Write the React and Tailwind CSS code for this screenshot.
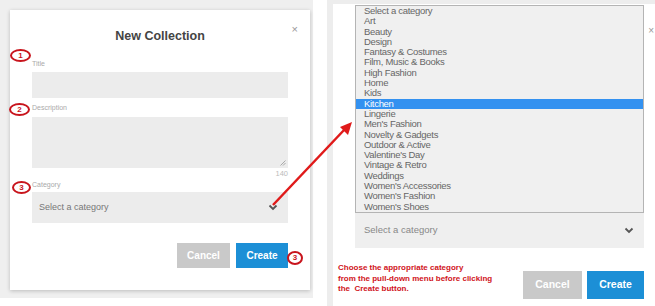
import React from "react";

const items = [
  "Select a category","Art","Beauty","Design","Fantasy & Costumes","Film, Music & Books","High Fashion","Home","Kids","Kitchen","Lingerie","Men's Fashion","Novelty & Gadgets","Outdoor & Active","Valentine's Day","Vintage & Retro","Weddings","Women's Accessories","Women's Fashion","Women's Shoes",
];

function Badge({ n, className }) {
  return (
    <div className={"absolute flex items-center justify-center rounded-[50%] border-2 border-[#c8141c] bg-white text-[8px] font-bold leading-none text-[#c8141c] " + className}>
      {n}
    </div>
  );
}

function Chevron({ className }) {
  return (
    <svg className={className} width="10" height="7" viewBox="0 0 10 7">
      <path d="M1.5 1.5 L5 5 L8.5 1.5" fill="none" stroke="#555" strokeWidth="1.8" />
    </svg>
  );
}

export default function App() {
  const font = { fontFamily: '"Liberation Sans", Arial, sans-serif' };
  return (
    <div className="relative flex h-[306px] w-[655px] overflow-hidden bg-white" style={font}>
      {/* LEFT */}
      <div className="h-[298px] w-[313px] shrink-0 bg-[#efefef] pl-[10px] pt-[10px]">
        <div className="relative flex h-[280px] w-[300px] flex-col bg-white px-[22px] shadow-[0_1px_4px_rgba(0,0,0,0.22)]">
          <div className="absolute right-[12px] top-[14px] text-[11px] leading-none text-[#999]">×</div>
          <div className="mt-[18px] text-center text-[12.5px] font-bold leading-[16px] text-[#444]">New Collection</div>
          <div className="mt-[16px] text-[7px] leading-[8px] text-[#aaa]">Title</div>
          <div className="mt-[4px] h-[26px] bg-[#ececec]" />
          <div className="mt-[6px] text-[7px] leading-[8px] text-[#aaa]">Description</div>
          <div className="relative mt-[5px] h-[51px] bg-[#ececec]">
            <svg className="absolute bottom-[2px] right-[2px]" width="6" height="6" viewBox="0 0 6 6">
              <path d="M0.5 5.5 L5.5 0.5 M3 5.5 L5.5 3" stroke="#999" strokeWidth="0.8" />
            </svg>
          </div>
          <div className="mt-[2px] text-right text-[7.5px] leading-[8px] text-[#bbb]">140</div>
          <div className="mt-[3px] text-[7px] leading-[8px] text-[#aaa]">Category</div>
          <div className="mt-[3px] flex h-[31px] items-center justify-between bg-[#ececec] pl-[7px] pr-[10px]">
            <span className="text-[9px] text-[#777]">Select a category</span>
            <Chevron />
          </div>
          <div className="mt-[20px] flex justify-end gap-[6px]">
            <div className="flex h-[25px] w-[53px] items-center justify-center bg-[#c9c9c9] text-[10px] font-bold text-white">Cancel</div>
            <div className="flex h-[25px] w-[52px] items-center justify-center bg-[#1c8fd6] text-[10px] font-bold text-white">Create</div>
          </div>
        </div>
      </div>

      {/* gap */}
      <div className="w-[14px] shrink-0 bg-white" />

      {/* RIGHT */}
      <div className="h-[306px] flex-1 bg-[#ededed] pl-[6px] pt-[4px]">
        <div className="relative flex h-full flex-col bg-white pl-[22px] pr-[11px]">
          <div className="absolute right-[1px] top-[22px] text-[10px] leading-none text-[#999]">×</div>
          <div className="mt-[1px] flex h-[208px] flex-col border border-[#b4b4b4] bg-[#f0f0f0]">
            {items.map((t) => (
              <div
                key={t}
                className={
                  "h-[10.3px] whitespace-nowrap pl-[8px] text-[9.5px] leading-[10.3px] tracking-[-0.3px] " +
                  (t === "Kitchen" ? "bg-[#3391f0] text-white" : "text-[#666]")
                }
              >
                {t}
              </div>
            ))}
          </div>
          <div className="flex h-[35px] items-center justify-between bg-[#efefef] pl-[9px] pr-[10px]">
            <span className="text-[9.5px] text-[#888]">Select a category</span>
            <Chevron />
          </div>
          <div className="mt-[14px] flex items-start justify-between">
            <div className="ml-[-17px] mt-[1px] text-[8px] font-bold leading-[10.5px] text-[#d0121a]">
              <div>Choose the appropriate category</div>
              <div>from the pull-down menu before clicking</div>
              <div>the&nbsp; Create button.</div>
            </div>
            <div className="mt-[9px] flex gap-[5px]">
              <div className="flex h-[28px] w-[59px] items-center justify-center bg-[#c9c9c9] text-[10.5px] font-bold text-white">Cancel</div>
              <div className="flex h-[28px] w-[57px] items-center justify-center bg-[#1c8fd6] text-[10.5px] font-bold text-white">Create</div>
            </div>
          </div>
        </div>
      </div>

      {/* annotations */}
      <Badge n="1" className="left-[10px] top-[49px] h-[13px] w-[21px]" />
      <Badge n="2" className="left-[9px] top-[103px] h-[13px] w-[21px]" />
      <Badge n="3" className="left-[12px] top-[181px] h-[13px] w-[19px]" />
      <Badge n="3" className="left-[287px] top-[251px] h-[14px] w-[16px]" />
      <svg className="absolute left-0 top-0" width="655" height="306" viewBox="0 0 655 306">
        <line x1="273" y1="205" x2="345" y2="129" stroke="#e01a1a" strokeWidth="2.5" />
        <polygon points="352,122 340,127 348,135" fill="#e01a1a" />
      </svg>
    </div>
  );
}
